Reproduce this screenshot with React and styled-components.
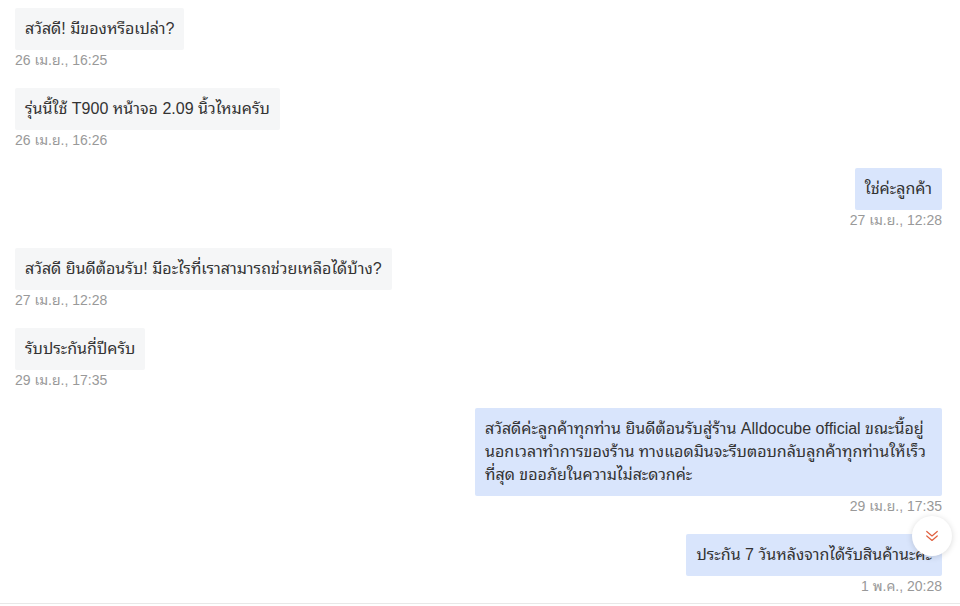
import React from 'react';
import styled, { createGlobalStyle } from 'styled-components';

const Global = createGlobalStyle`
    html, body {
        margin: 0;
        padding: 0;
        background: #fff;
    }
    body {
        font-family: "Liberation Sans", "Noto Sans Thai Looped", "Noto Sans Thai", Arial, sans-serif;
    }
`

const Page = styled.div`
    width: 960px;
    height: 604px;
    box-sizing: border-box;
    position: relative;
    overflow: hidden;
    border-bottom: 1px solid #e8e8e8;
`
const List = styled.div`
    display: flex;
    flex-direction: column;
    padding: 8px 18px 0 15px;
`
const Message = styled.div`
    display: flex;
    flex-direction: column;
    align-items: ${props => props.mine ? 'flex-end' : 'flex-start'};
    margin-bottom: 18px;
`
const Bubble = styled.div`
    max-width: 447px;
    padding: 9px 10px 10px;
    border-radius: 2px;
    font-size: 16px;
    line-height: 23px;
    color: #333;
    background: ${props => props.mine ? '#d9e5fc' : '#f5f6f7'};
`
const Time = styled.div`
    font-size: 14px;
    line-height: 20px;
    color: #999;
`
const ScrollButton = styled.button`
    position: absolute;
    left: 912px;
    top: 516px;
    width: 40px;
    height: 40px;
    border-radius: 50%;
    border: none;
    background: #fff;
    box-shadow: 0 1px 6px rgba(0, 0, 0, 0.15);
    display: flex;
    align-items: center;
    justify-content: center;
    padding: 0;
`

const messages = [
    { id: 1, text: 'สวัสดี! มีของหรือเปล่า?', time: '26 เม.ย., 16:25' },
    { id: 2, text: 'รุ่นนี้ใช้ T900 หน้าจอ 2.09 นิ้วไหมครับ', time: '26 เม.ย., 16:26' },
    { id: 3, mine: true, text: 'ใช่ค่ะลูกค้า', time: '27 เม.ย., 12:28' },
    { id: 4, text: 'สวัสดี ยินดีต้อนรับ! มีอะไรที่เราสามารถช่วยเหลือได้บ้าง?', time: '27 เม.ย., 12:28' },
    { id: 5, text: 'รับประกันกี่ปีครับ', time: '29 เม.ย., 17:35' },
    { id: 6, mine: true, text: 'สวัสดีค่ะลูกค้าทุกท่าน ยินดีต้อนรับสู่ร้าน Alldocube official ขณะนี้อยู่นอกเวลาทำการของร้าน ทางแอดมินจะรีบตอบกลับลูกค้าทุกท่านให้เร็วที่สุด ขออภัยในความไม่สะดวกค่ะ', time: '29 เม.ย., 17:35' },
    { id: 7, mine: true, text: 'ประกัน 7 วันหลังจากได้รับสินค้านะคะ', time: '1 พ.ค., 20:28' },
]

const App = () => {
    return (
        <Page>
            <Global />
            <List>
                {messages.map(m => (
                    <Message key={m.id} mine={m.mine}>
                        <Bubble mine={m.mine}>{m.text}</Bubble>
                        <Time>{m.time}</Time>
                    </Message>
                ))}
            </List>
            <ScrollButton>
                <svg width="18" height="18" viewBox="0 0 24 24" fill="none" stroke="#e0603f" strokeWidth="1.6" strokeLinecap="round" strokeLinejoin="round">
                    <path d="M5 6l7 6 7-6" />
                    <path d="M5 12l7 6 7-6" />
                </svg>
            </ScrollButton>
        </Page>
    )
}
export default App
